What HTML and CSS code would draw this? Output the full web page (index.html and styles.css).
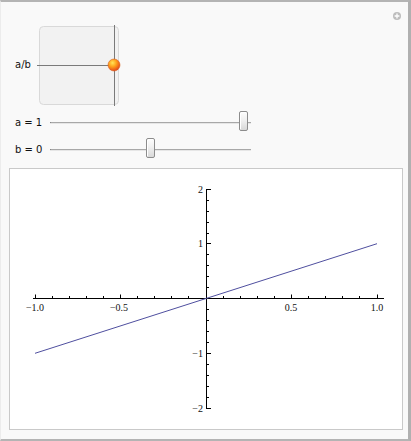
FILE: index.html
```html
<!DOCTYPE html>
<html>
<head>
<meta charset="utf-8">
<link rel="stylesheet" href="styles.css">
</head>
<body>
<div class="frame">
  <span class="plus-icon"><svg width="10" height="10" viewBox="0 0 10 10"><circle cx="5" cy="5" r="4" fill="#bdbdbd"/><path d="M5 2.6V7.4M2.6 5H7.4" stroke="#fff" stroke-width="1.3"/></svg></span>
  <div class="row pad-row">
    <span class="label label-ab">a/b</span>
    <svg class="pad" width="84" height="81" viewBox="0 0 84 81">
      <rect x="2.5" y="1.5" width="79" height="78" rx="4" fill="#f2f2f2" stroke="#d9d9d9"/>
      <path d="M77.5 0V81" stroke="#7a7a7a"/>
      <path d="M0 40.5H77" stroke="#7a7a7a"/>
      <defs>
        <radialGradient id="ball" cx="0.38" cy="0.32" r="0.7">
          <stop offset="0" stop-color="#ffe45a"/>
          <stop offset="0.45" stop-color="#ffa21c"/>
          <stop offset="1" stop-color="#e2441a"/>
        </radialGradient>
      </defs>
      <circle cx="77" cy="40" r="6" fill="url(#ball)" stroke="#d9621f" stroke-width="0.6"/>
    </svg>
  </div>
  <div class="row slider-row row-a">
    <span class="label label-slider">a = 1</span>
    <div class="track"><span class="thumb thumb-a"></span></div>
  </div>
  <div class="row slider-row row-b">
    <span class="label label-slider">b = 0</span>
    <div class="track"><span class="thumb thumb-b"></span></div>
  </div>
  <div class="plot">
    <svg width="392" height="260" viewBox="10 169 392 260">
      <g stroke="#000" stroke-width="1" fill="none">
        <path d="M33 298.5H384"/>
        <path d="M206.5 189V409"/>
        <path d="M35.5 298.5V294.5M120.5 298.5V294.5M291.5 298.5V294.5M377.5 298.5V294.5"/>
        <path d="M52.5 298.5V296M69.5 298.5V296M86.5 298.5V296M103.5 298.5V296M137.5 298.5V296M154.5 298.5V296M171.5 298.5V296M188.5 298.5V296M223.5 298.5V296M240.5 298.5V296M257.5 298.5V296M274.5 298.5V296M308.5 298.5V296M325.5 298.5V296M342.5 298.5V296M359.5 298.5V296"/>
        <path d="M206.5 189.5H211M206.5 243.5H211M206.5 353.5H211M206.5 408.5H211"/>
        <path d="M206.5 200.5H209M206.5 211.5H209M206.5 222.5H209M206.5 233.5H209M206.5 254.5H209M206.5 265.5H209M206.5 276.5H209M206.5 287.5H209M206.5 309.5H209M206.5 320.5H209M206.5 331.5H209M206.5 342.5H209M206.5 364.5H209M206.5 375.5H209M206.5 386.5H209M206.5 397.5H209"/>
      </g>
      <path d="M35 353.3L377 243.7" stroke="#4f4f9f" stroke-width="1" fill="none"/>
      <g class="ticklabel" text-anchor="middle">
        <text x="35" y="311">−1.0</text>
        <text x="119" y="311">−0.5</text>
        <text x="291" y="311">0.5</text>
        <text x="377" y="311">1.0</text>
      </g>
      <g class="ticklabel" text-anchor="end">
        <text x="203" y="192.5">2</text>
        <text x="203" y="247">1</text>
        <text x="203" y="357">−1</text>
        <text x="203" y="412">−2</text>
      </g>
    </svg>
  </div>
</div>
</body>
</html>
```
FILE: styles.css
```css
html, body {
  margin: 0;
  padding: 0;
  background: #ffffff;
}
.frame {
  position: relative;
  width: 411px;
  height: 441px;
  box-sizing: border-box;
  background: #f9f9f9;
  border-top: 2px solid #b4b4b4;
  border-right: 3px solid #b0b0b0;
  border-bottom: 2px solid #b4b4b4;
  border-left: 1px solid #ececec;
  padding: 23px 5px 9px 8px;
  display: flex;
  flex-direction: column;
  font-family: "DejaVu Sans", "Liberation Sans", sans-serif;
  font-size: 10px;
  color: #111;
}
.plus-icon {
  position: absolute;
  top: 9px;
  right: 6px;
  width: 10px;
  height: 10px;
  line-height: 0;
}
.row {
  display: flex;
  align-items: center;
  padding-left: 6px;
}
.pad-row {
  height: 80px;
  align-items: flex-start;
}
.label-ab {
  width: 22px;
  margin-top: 34px;
}
.pad {
  display: block;
}
.slider-row {
  height: 22px;
}
.row-a {
  margin-top: 6px;
}
.row-b {
  margin-top: 5px;
}
.label-slider {
  width: 35px;
}
.track {
  position: relative;
  width: 200px;
  height: 1px;
  background: #a8a8a8;
  border-left: 1px solid #888;
  box-shadow: 0 1px 0 #e6e6e6;
}
.thumb {
  position: absolute;
  top: -11px;
  width: 9px;
  height: 20px;
  box-sizing: border-box;
  border: 1px solid #8c8c8c;
  border-radius: 2px;
  background: linear-gradient(to bottom, #fdfdfd 0%, #f0f0f0 45%, #d8d8d8 100%);
  box-shadow: inset 1px 1px 0 #ffffff;
}
.thumb-a {
  left: 188px;
}
.thumb-b {
  left: 95px;
}
.plot {
  margin-top: 8px;
  width: 394px;
  height: 262px;
  box-sizing: border-box;
  border: 1px solid #c9c9c9;
  background: #ffffff;
  line-height: 0;
}
.plot svg {
  display: block;
}
.ticklabel {
  font-family: "Liberation Serif", "DejaVu Serif", serif;
  font-size: 10px;
  fill: #111;
}
```
